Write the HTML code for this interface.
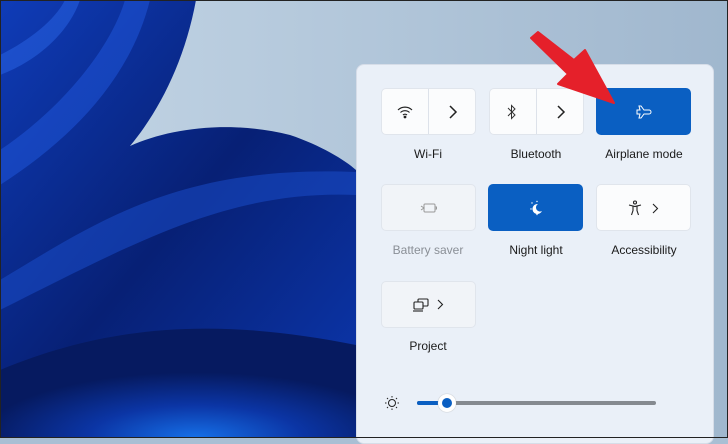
<!DOCTYPE html>
<html><head><style>
*{margin:0;padding:0;box-sizing:border-box}
body{width:728px;height:438px;overflow:hidden;position:relative;font-family:"Liberation Sans",sans-serif;background:#a9bfd4}
.bg{position:absolute;left:0;top:0}
.panel{position:absolute;left:356px;top:64px;width:358px;height:380px;background:#eaf0f8;border-radius:8px;border:1px solid #d6dde8}
.btn{position:absolute;width:95px;height:47px;background:#fbfcfd;border:1px solid #e0e5ec;border-radius:5px}
.blue{background:#0a5fc2;border-color:#0a5fc2}
.dis{background:#f1f4f8}
.split{position:absolute;left:46px;top:0;width:1px;height:100%;background:#dde2ea}
.lbl{position:absolute;width:120px;text-align:center;font-size:12px;color:#1a1a1a}
.btn svg{position:absolute}
.frame{position:absolute;inset:0;border:1px solid #222;pointer-events:none}
</style></head><body>
<svg class="bg" width="728" height="438">
<defs>
<linearGradient id="sky" x1="0" y1="0" x2="1" y2="0"><stop offset="0" stop-color="#c4d6e6"/><stop offset="1" stop-color="#a0b7ce"/></linearGradient>
<linearGradient id="b1" x1="0" y1="0" x2="1" y2="1"><stop offset="0" stop-color="#0f3cb8"/><stop offset=".5" stop-color="#072075"/><stop offset="1" stop-color="#0c38b0"/></linearGradient>
<radialGradient id="b2" cx=".55" cy="1" r=".6"><stop offset="0" stop-color="#1670e8"/><stop offset=".5" stop-color="#0b35a5"/><stop offset="1" stop-color="#061a60"/></radialGradient>
</defs>
<rect width="728" height="438" fill="url(#sky)"/>
<path d="M0 0 H196 C185 60 160 110 130 146 C170 128 230 120 290 135 C320 145 345 160 356 170 V438 H0Z" fill="url(#b1)"/>
<path d="M0 150 C60 110 110 50 125 0 H150 C130 80 70 140 0 185Z" fill="#1f55d8" opacity=".55"/>
<path d="M0 55 C30 40 55 20 65 0 H80 C70 30 40 60 0 75Z" fill="#2a66e8" opacity=".5"/>
<path d="M0 280 C100 220 180 165 356 172 V195 C230 190 140 240 0 310Z" fill="#1a4cc8" opacity=".55"/>
<path d="M0 370 C120 320 230 320 356 345 V438 H0Z" fill="url(#b2)"/>
</svg>
<div class="panel"></div>
<div class="btn" style="left:381px;top:88px"><div class="split"></div>
<svg style="left:14px;top:15px" width="18" height="16" viewBox="0 0 18 16" fill="none" stroke="#222" stroke-width="1.2"><path d="M2 6a10 10 0 0 1 14 0M4.5 8.5a6.5 6.5 0 0 1 9 0M7 11a3 3 0 0 1 4 0"/><circle cx="9" cy="13" r=".8" fill="#222"/></svg>
<svg style="left:66px;top:16px" width="10" height="14" viewBox="0 0 10 14" fill="none" stroke="#222" stroke-width="1.5"><path d="M2 1l6 6-6 6"/></svg></div>
<div class="btn" style="left:489px;top:88px"><div class="split"></div>
<svg style="left:17px;top:15px" width="10" height="16" viewBox="0 0 10 16" fill="none" stroke="#333" stroke-width="1"><path d="M1 4l7 7-3.5 3.5V1.5L8 5 1 12"/></svg>
<svg style="left:66px;top:16px" width="10" height="14" viewBox="0 0 10 14" fill="none" stroke="#222" stroke-width="1.5"><path d="M2 1l6 6-6 6"/></svg></div>
<div class="btn blue" style="left:596px;top:88px">
<svg style="left:38px;top:15px" width="18" height="16" viewBox="0 0 18 16" fill="none" stroke="#fff" stroke-width="1"><path d="M2 6h3l-1-4h2l3 4h5a2 2 0 0 1 0 4h-5l-3 4H4l1-4H2z"/></svg></div>
<div class="lbl" style="left:368px;top:147px">Wi-Fi</div>
<div class="lbl" style="left:476px;top:147px">Bluetooth</div>
<div class="lbl" style="left:584px;top:147px">Airplane mode</div>
<div class="btn dis" style="left:381px;top:184px">
<svg style="left:38px;top:17px" width="18" height="12" viewBox="0 0 18 12" fill="none" stroke="#999" stroke-width="1"><rect x="4" y="2" width="11" height="8" rx="1"/><path d="M15 5v2h1.5V5zM1 4l3 2-3 2"/></svg></div>
<div class="btn blue" style="left:488px;top:184px">
<svg style="left:40px;top:15px" width="16" height="16" viewBox="0 0 16 16"><path d="M9 4a5 5 0 1 0 4 7 4 4 0 0 1-4-7z" fill="#fff"/><g fill="#fff"><circle cx="3" cy="3" r=".7"/><circle cx="8" cy="1.5" r=".7"/><circle cx="2" cy="9" r=".7"/><circle cx="8" cy="14.5" r=".7"/></g></svg></div>
<div class="btn" style="left:596px;top:184px">
<svg style="left:31px;top:15px" width="14" height="16" viewBox="0 0 14 16" fill="none" stroke="#222" stroke-width="1.1"><circle cx="7" cy="2.5" r="1.5"/><path d="M1 5l6 1.5L13 5M5 6.5v4L3.5 15M9 6.5v4l1.5 4.5"/></svg>
<svg style="left:55px;top:18px" width="7" height="11" viewBox="0 0 7 11" fill="none" stroke="#222" stroke-width="1.1"><path d="M1 1l4.5 4.5L1 10"/></svg></div>
<div class="lbl" style="left:368px;top:243px;color:#8a8f96">Battery saver</div>
<div class="lbl" style="left:476px;top:243px">Night light</div>
<div class="lbl" style="left:584px;top:243px">Accessibility</div>
<div class="btn dis" style="left:381px;top:281px">
<svg style="left:30px;top:15px" width="18" height="16" viewBox="0 0 18 16" fill="none" stroke="#222" stroke-width="1.1"><rect x="6" y="2" width="10" height="7" rx="1"/><rect x="2" y="5" width="9" height="7" rx="1" fill="#f1f4f8"/><path d="M1 14h10"/></svg>
<svg style="left:55px;top:17px" width="7" height="11" viewBox="0 0 7 11" fill="none" stroke="#222" stroke-width="1.1"><path d="M1 1l4.5 4.5L1 10"/></svg></div>
<div class="lbl" style="left:368px;top:339px">Project</div>
<svg style="position:absolute;left:384px;top:395px" width="16" height="16" viewBox="0 0 16 16" fill="none" stroke="#222" stroke-width="1"><circle cx="8" cy="8" r="3.5"/><path d="M8 1v1.5M8 13.5V15M1 8h1.5M13.5 8H15M3 3l1 1M12 12l1 1M3 13l1-1M12 4l1-1"/></svg>
<div style="position:absolute;left:417px;top:401px;width:239px;height:4px;border-radius:2px;background:#858a90"></div>
<div style="position:absolute;left:417px;top:401px;width:32px;height:4px;border-radius:2px;background:#0a5fc2"></div>
<div style="position:absolute;left:438px;top:394px;width:18px;height:18px;border-radius:50%;background:#fff;box-shadow:0 0 1px #999"></div>
<div style="position:absolute;left:442px;top:398px;width:10px;height:10px;border-radius:50%;background:#0a5fc2"></div>
<svg style="position:absolute;left:0;top:0" width="728" height="438"><path d="M531 38 L538 32 L574 60 L585 50 L614 103 L558 84 L568 74 Z" fill="#e5202a" stroke="#e5202a" stroke-linejoin="round" stroke-width="2"/></svg>
<div class="frame"></div>
</body></html>
